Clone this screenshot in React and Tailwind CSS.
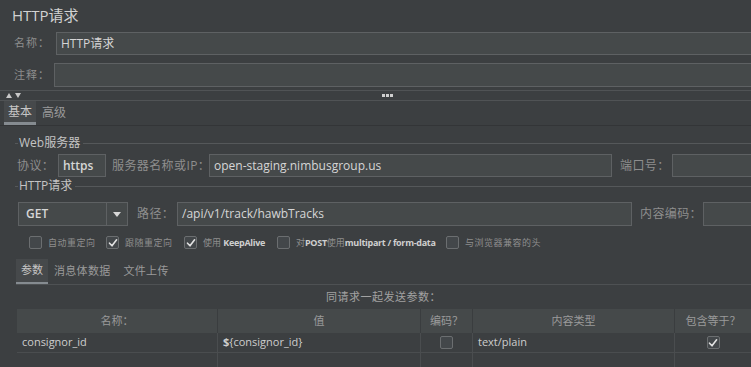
import React from "react";

function Box({ checked }) {
  return (
    <div className="w-[13px] h-[13px] shrink-0 rounded-[2px] border border-[#6b6e70] bg-[#43474a] flex items-center justify-center">
      {checked && (
        <svg width="10" height="10" viewBox="0 0 10 10">
          <polyline points="1.5,5.2 4,7.8 8.6,1.8" fill="none" stroke="#e2e2e2" strokeWidth="1.6" strokeLinecap="round" strokeLinejoin="round" />
        </svg>
      )}
    </div>
  );
}

function Legend({ children }) {
  return (
    <div className="h-[14px] flex items-center pl-[15px] shrink-0">
      <div className="w-[3px] h-px bg-[#55585a]" />
      <span className="px-[1px] text-[12px] leading-none text-[#c4c4c4]">{children}</span>
      <div className="flex-1 h-px bg-[#55585a] ml-[2px]" />
    </div>
  );
}

const input = "h-full bg-[#45494a] border border-[#5e6163] flex items-center pl-[4px] text-[12px] text-[#d6d6d6] shrink-0";
const label = "text-[12px] tracking-[0.4px] text-[#8e8e8e] shrink-0 whitespace-nowrap";

export default function App() {
  return (
    <div className="w-[751px] h-[367px] overflow-hidden bg-[#3c3f41] text-[#bbbbbb] font-['Open_Sans','Noto_Sans_CJK_SC',sans-serif] flex flex-col">
      <div className="h-[30px] flex items-center pl-[12px] text-[15px] text-[#d2d2d2] shrink-0">HTTP请求</div>

      <div className="mt-[2px] h-[23px] flex items-center shrink-0">
        <span className="w-[56px] pl-[14px] text-[11px] tracking-[1px] text-[#8e8e8e] shrink-0">名称：</span>
        <div className={input + " flex-1 -mr-[3px]"}>HTTP请求</div>
      </div>

      <div className="mt-[8px] h-[24px] flex items-center shrink-0">
        <span className="w-[54px] pl-[14px] text-[11px] tracking-[1px] text-[#8e8e8e] shrink-0">注释：</span>
        <div className={input + " flex-1 -mr-[3px]"}></div>
      </div>

      <div className="mt-[3px] h-[11px] border-y border-[#505355] shrink-0 flex items-center">
        <div className="flex items-center gap-[3px] pl-[6px]">
          <svg width="6" height="5" viewBox="0 0 6 5"><polygon points="0,5 6,5 3,0" fill="#c8c8c8" /></svg>
          <svg width="6" height="5" viewBox="0 0 6 5"><polygon points="0,0 6,0 3,5" fill="#c8c8c8" /></svg>
        </div>
        <div className="ml-[361px] flex gap-[1px]">
          <div className="w-[3px] h-[3px] bg-[#cfcfcf]" />
          <div className="w-[3px] h-[3px] bg-[#cfcfcf]" />
          <div className="w-[3px] h-[3px] bg-[#cfcfcf]" />
        </div>
      </div>

      <div className="h-[25px] flex items-stretch pl-[4px] shrink-0 border-b border-[#333537]">
        <div className="px-[4px] bg-[#46494b] border-b-[3px] border-[#858b90] flex items-center text-[12px] text-[#c6c6c6]">基本</div>
        <div className="px-[6px] flex items-center text-[12px] text-[#9a9a9a]">高级</div>
      </div>

      <div className="mt-[10px]"><Legend>Web服务器</Legend></div>

      <div className="mt-[4px] h-[23px] flex items-center pl-[17px] shrink-0">
        <span className={label + " w-[41px] text-[11px]"}>协议：</span>
        <div className={input + " w-[48px] font-semibold"}>https</div>
        <span className={label + " ml-[6px] w-[97px]"}>服务器名称或IP：</span>
        <div className={input + " w-[403px]"}>open-staging.nimbusgroup.us</div>
        <span className={label + " ml-[8px] w-[52px]"}>端口号：</span>
        <div className={input + " flex-1 -mr-[3px]"}></div>
      </div>

      <div className="mt-[2px]"><Legend>HTTP请求</Legend></div>

      <div className="mt-[9px] h-[24px] flex items-center pl-[18px] shrink-0">
        <div className="w-[110px] h-full border border-[#5e6163] bg-[#45494a] flex shrink-0">
          <div className="flex-1 flex items-center pl-[7px] text-[12px] font-semibold text-[#d6d6d6]">GET</div>
          <div className="w-[21px] border-l border-[#5e6163] flex items-center justify-center">
            <svg width="8" height="5" viewBox="0 0 8 5"><polygon points="0,0 8,0 4,5" fill="#d8d8d8" /></svg>
          </div>
        </div>
        <span className={label + " ml-[9px] w-[40px]"}>路径：</span>
        <div className={input + " w-[455px]"}>/api/v1/track/hawbTracks</div>
        <span className={label + " ml-[8px] w-[63px]"}>内容编码：</span>
        <div className={input + " flex-1 -mr-[3px]"}></div>
      </div>

      <div className="mt-[10px] h-[13px] flex items-center pl-[29px] shrink-0 text-[9px] text-[#8e8e8e] whitespace-nowrap">
        <div className="w-[77px] flex items-center gap-[6px]"><Box /><span className="tracking-[0.5px]">自动重定向</span></div>
        <div className="w-[78px] flex items-center gap-[6px]"><Box checked /><span className="tracking-[0.5px]">跟随重定向</span></div>
        <div className="w-[93px] flex items-center gap-[6px]"><Box checked /><span>使用 <b className="text-[#cfcfcf] tracking-[-0.3px]">KeepAlive</b></span></div>
        <div className="w-[169px] flex items-center gap-[6px]"><Box /><span>对<b className="text-[#cfcfcf] tracking-[-0.3px]">POST</b>使用<b className="text-[#cfcfcf] tracking-[-0.3px]">multipart / form-data</b></span></div>
        <div className="flex items-center gap-[6px]"><Box /><span className="tracking-[0.5px]">与浏览器兼容的头</span></div>
      </div>

      <div className="mt-[10px] ml-[16px] h-[26px] flex items-stretch border-b border-[#4e5153] shrink-0 text-[11px]">
        <div className="w-[32px] bg-[#46494b] border-b-[2px] border-[#858b90] flex items-center justify-center text-[#c6c6c6]">参数</div>
        <div className="ml-[6px] flex items-center text-[#9a9a9a] tracking-[0.3px]">消息体数据</div>
        <div className="ml-[13px] flex items-center text-[#9a9a9a] tracking-[0.3px]">文件上传</div>
      </div>

      <div className="ml-[16px] h-[24px] flex items-center justify-center text-[11px] tracking-[0.5px] text-[#a2a2a2] shrink-0">同请求一起发送参数：</div>

      <div className="ml-[17px] grid grid-cols-[201px_203px_52px_202px_1fr] shrink-0 text-[11px]">
        <div className="h-[24px] bg-[#45494a] border-r border-[#3a3d3f] flex items-center justify-center text-[#9a9a9a]">名称：</div>
        <div className="h-[24px] bg-[#45494a] border-r border-[#3a3d3f] flex items-center justify-center text-[#9a9a9a]">值</div>
        <div className="h-[24px] bg-[#45494a] border-r border-[#3a3d3f] flex items-center justify-center text-[#9a9a9a]">编码？</div>
        <div className="h-[24px] bg-[#45494a] border-r border-[#3a3d3f] flex items-center justify-center text-[#9a9a9a]">内容类型</div>
        <div className="h-[24px] bg-[#45494a] flex items-center justify-center text-[#9a9a9a]">包含等于？</div>

        <div className="h-[20px] border-r border-b border-[#4a4d4f] flex items-center pl-[5px] text-[#cdcdcd]">consignor_id</div>
        <div className="h-[20px] border-r border-b border-[#4a4d4f] flex items-center pl-[5px] text-[#cdcdcd]"><b>$</b>{"{consignor_id}"}</div>
        <div className="h-[20px] border-r border-b border-[#4a4d4f] flex items-center justify-center"><Box /></div>
        <div className="h-[20px] border-r border-b border-[#4a4d4f] flex items-center pl-[5px] text-[#cdcdcd]">text/plain</div>
        <div className="h-[20px] border-b border-[#4a4d4f] flex items-center justify-center"><Box checked /></div>

        <div className="h-[20px] border-r border-[#4a4d4f]" />
        <div className="h-[20px] border-r border-[#4a4d4f]" />
        <div className="h-[20px] border-r border-[#4a4d4f]" />
        <div className="h-[20px] border-r border-[#4a4d4f]" />
        <div className="h-[20px]" />
      </div>
    </div>
  );
}
